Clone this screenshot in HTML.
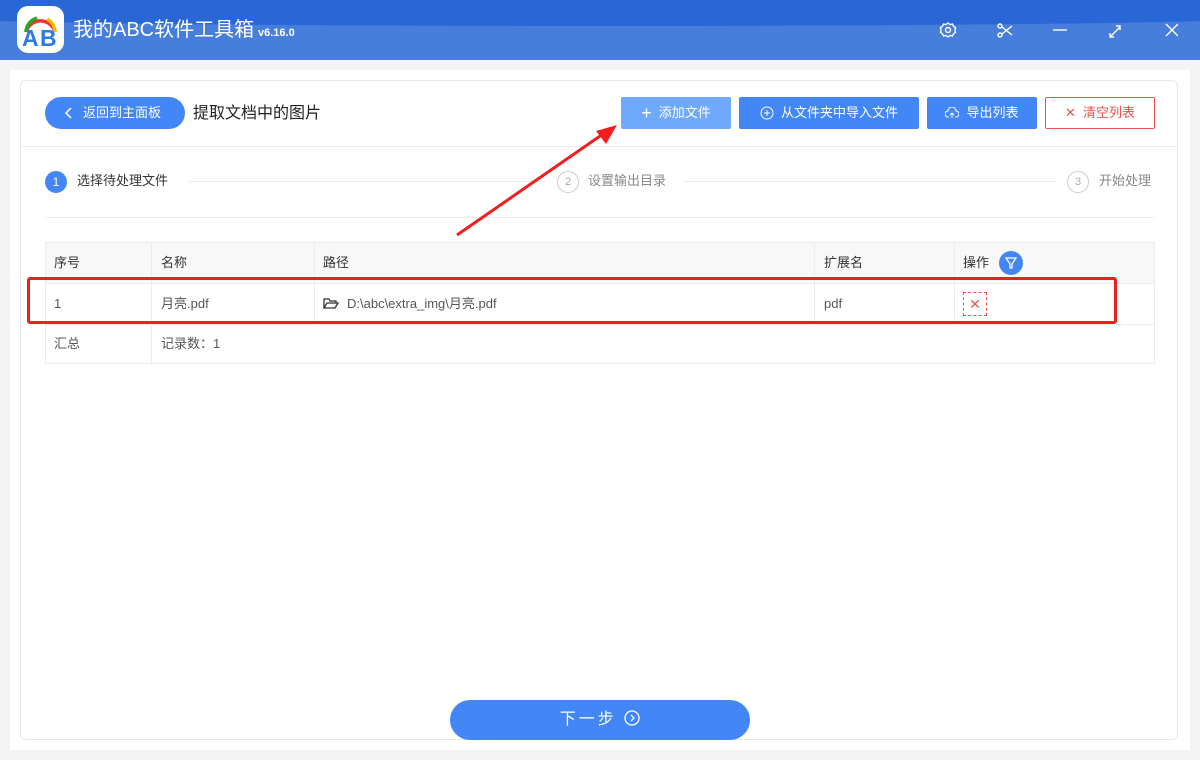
<!DOCTYPE html>
<html><head><meta charset="utf-8"><style>
*{margin:0;padding:0;box-sizing:border-box}
body{width:1200px;height:760px;background:#f4f4f4;font-family:"Liberation Sans","Noto Sans CJK SC",sans-serif;position:relative;overflow:hidden;font-size:13px;color:#333;line-height:16px}
.hdr{position:absolute;left:0;top:0;width:1200px;height:60px;background:#477ddb;overflow:hidden}
.hdr .top{position:absolute;left:-50px;top:-40px;width:1300px;height:66px;background:#2a67d6;border-radius:0 0 50% 50%/0 0 8px 8px}
.logo{position:absolute;left:17px;top:6px;width:47px;height:47px;background:#fff;border-radius:11px}
.title{position:absolute;left:73px;top:18px;color:#fff;font-size:20px;line-height:24px}
.ver{position:absolute;left:258px;top:25px;color:#fff;font-size:11px;font-weight:bold}
.abs{position:absolute}
.card{position:absolute;left:20px;top:80px;width:1158px;height:660px;background:#fff;border:1px solid #e8e8e8;border-radius:6px}
.wrap{position:absolute;left:10px;top:70px;width:1180px;height:680px;background:#fff}
.btn{position:absolute;top:97px;height:32px;border-radius:2px;color:#fff;font-size:13px;display:flex;align-items:center;justify-content:center;gap:7px}
.th,.td{position:absolute;font-size:13px}
.vl{position:absolute;width:1px;background:#ececec}
.hl{position:absolute;height:1px;background:#ececec}
</style></head><body>
<div class="hdr"><div class="top"></div>
<div class="logo"><svg width="47" height="47" viewBox="0 0 47 47"><path d="M9 26 A15 15 0 0 1 38 26" fill="none" stroke="#e33" stroke-width="3.5"/><path d="M9 26 A15 15 0 0 1 20 12" fill="none" stroke="#2a2" stroke-width="3.5"/><path d="M30 13 A15 15 0 0 1 38 26" fill="none" stroke="#fb0" stroke-width="3.5"/><text x="5" y="40" font-size="23" font-weight="bold" fill="#2b7be0" font-family="Liberation Sans">A</text><text x="23" y="40" font-size="23" font-weight="bold" fill="#2b7be0" font-family="Liberation Sans">B</text></svg></div>
<div class="title">我的ABC软件工具箱</div><div class="ver">v6.16.0</div>
<svg class="abs" style="left:938px;top:20px" width="240" height="22" viewBox="0 0 240 22" fill="none" stroke="#fff" stroke-width="1.4">
<circle cx="10" cy="10" r="2.5"/><path d="M10 3l2 1.5 2.5-.5 1 2.3 2 1.2-.5 2.5.5 2.5-2 1.2-1 2.3-2.5-.5-2 1.5-2-1.5-2.5.5-1-2.3-2-1.2.5-2.5-.5-2.5 2-1.2 1-2.3 2.5.5z"/>
<circle cx="62" cy="6" r="2"/><circle cx="62" cy="15" r="2"/><path d="M64 7l10 8M64 14l10-8"/>
<path d="M115 10h14"/>
<path d="M172 17l10-10M178 6h4v4M172 13v4h4"/>
<path d="M228 4l12 12M240 4l-12 12"/></svg>
</div>
<div class="wrap"></div>
<div class="card"></div>
<div class="abs" style="left:45px;top:97px;width:140px;height:32px;background:#4287f5;border-radius:16px;color:#fff;font-size:13px;line-height:32px;padding-left:38px">返回到主面板</div>
<svg class="abs" style="left:64px;top:106px" width="10" height="14"><path d="M7 2L2 7l5 5" stroke="#fff" stroke-width="1.5" fill="none"/></svg>
<div class="abs" style="left:193px;top:104px;font-size:16px;line-height:20px;color:#222">提取文档中的图片</div>
<div class="btn" style="left:621px;width:110px;background:#6ea9fb"><span style="font-size:18px">+</span>添加文件</div>
<div class="btn" style="left:739px;width:180px;background:#4287f5"><svg width="14" height="14"><circle cx="7" cy="7" r="6" stroke="#fff" fill="none"/><path d="M7 4v6M4 7h6" stroke="#fff"/></svg>从文件夹中导入文件</div>
<div class="btn" style="left:927px;width:110px;background:#4287f5"><svg width="14" height="12"><path d="M4 10H3a3 3 0 0 1 0-6 4 4 0 0 1 8 0 3 3 0 0 1 0 6h-1M7 11V6M5 8l2-2 2 2" stroke="#fff" fill="none"/></svg>导出列表</div>
<div class="btn" style="left:1045px;width:110px;background:#fff;border:1px solid #f05050;color:#f05050"><span>✕</span>清空列表</div>
<div class="hl" style="left:21px;top:146px;width:1156px"></div>
<div class="abs" style="left:45px;top:171px;width:22px;height:22px;border-radius:50%;background:#4287f5;color:#fff;font-size:12px;text-align:center;line-height:22px">1</div>
<div class="abs" style="left:77px;top:173px;font-size:13px">选择待处理文件</div>
<div class="hl" style="left:189px;top:181px;width:357px"></div>
<div class="abs" style="left:557px;top:171px;width:22px;height:22px;border-radius:50%;border:1px solid #ccc;color:#aaa;font-size:11px;text-align:center;line-height:20px">2</div>
<div class="abs" style="left:588px;top:173px;color:#888">设置输出目录</div>
<div class="hl" style="left:684px;top:181px;width:372px"></div>
<div class="abs" style="left:1067px;top:171px;width:22px;height:22px;border-radius:50%;border:1px solid #ccc;color:#aaa;font-size:11px;text-align:center;line-height:20px">3</div>
<div class="abs" style="left:1099px;top:173px;color:#888">开始处理</div>
<div class="hl" style="left:45px;top:217px;width:1110px"></div>
<div class="abs" style="left:45px;top:242px;width:1110px;height:122px;border:1px solid #ececec"></div>
<div class="abs" style="left:46px;top:243px;width:1108px;height:40px;background:#f8f8f8"></div>
<div class="hl" style="left:45px;top:283px;width:1110px"></div>
<div class="hl" style="left:45px;top:324px;width:1110px"></div>
<div class="vl" style="left:151px;top:242px;height:122px"></div>
<div class="vl" style="left:314px;top:242px;height:82px"></div>
<div class="vl" style="left:814px;top:242px;height:82px"></div>
<div class="vl" style="left:954px;top:242px;height:82px"></div>
<div class="th" style="left:54px;top:255px">序号</div>
<div class="th" style="left:161px;top:255px">名称</div>
<div class="th" style="left:323px;top:255px">路径</div>
<div class="th" style="left:824px;top:255px">扩展名</div>
<div class="th" style="left:963px;top:255px">操作</div>
<div class="abs" style="left:999px;top:251px;width:24px;height:24px;border-radius:50%;background:#4287f5"><svg width="24" height="24"><path d="M7 7h10l-4 6v4h-2v-4z" stroke="#fff" fill="none" stroke-width="1.3"/></svg></div>
<div class="td" style="left:54px;top:296px;color:#555">1</div>
<div class="td" style="left:161px;top:296px;color:#555">月亮.pdf</div>
<svg class="abs" style="left:323px;top:297px" width="16" height="13"><path d="M1 11V2h5l1 2h6v2M1 11l3-5h11l-3 5z" stroke="#333" fill="none" stroke-width="1.3"/></svg>
<div class="td" style="left:347px;top:296px;color:#555">D:\abc\extra_img\月亮.pdf</div>
<div class="td" style="left:824px;top:296px;color:#555">pdf</div>
<div class="abs" style="left:963px;top:292px;width:24px;height:24px;border:1px dashed #f05050;color:#f05050;text-align:center;line-height:22px;font-size:14px">✕</div>
<div class="td" style="left:54px;top:336px;color:#555">汇总</div>
<div class="td" style="left:161px;top:336px;color:#555">记录数：1</div>
<div class="abs" style="left:27px;top:277px;width:1090px;height:47px;border:3px solid #f01e1e;border-radius:3px"></div>
<svg class="abs" style="left:0;top:0" width="1200" height="760"><line x1="457" y1="235" x2="603" y2="134" stroke="#f01e1e" stroke-width="3"/><path d="M617 125L596 131 606 144z" fill="#f01e1e"/></svg>
<div class="abs" style="left:450px;top:700px;width:300px;height:40px;border-radius:20px;background:#4287f5;color:#fff;font-size:16px;text-align:center;line-height:40px;letter-spacing:3px">下一步 <svg width="16" height="16" style="vertical-align:-2px"><circle cx="8" cy="8" r="7" stroke="#fff" fill="none" stroke-width="1.3"/><path d="M7 5l3 3-3 3" stroke="#fff" fill="none" stroke-width="1.3"/></svg></div>
</body></html>
